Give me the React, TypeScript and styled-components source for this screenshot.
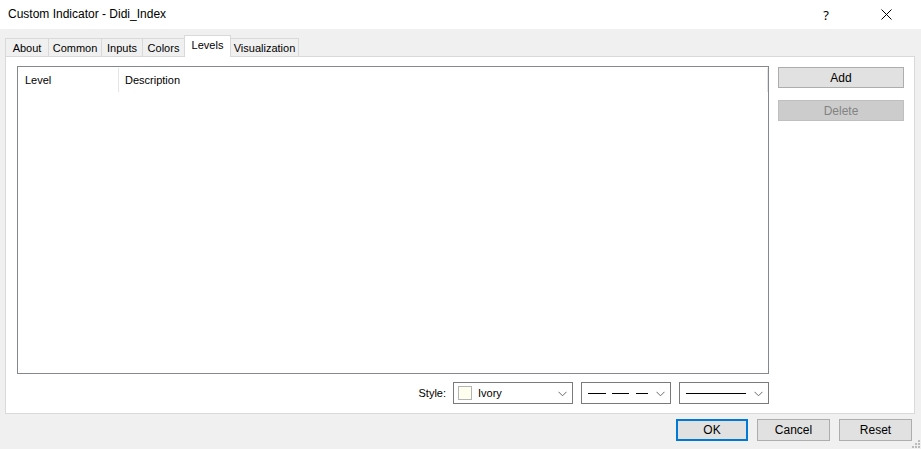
import * as React from 'react'
import styled, { createGlobalStyle } from 'styled-components'

const GlobalStyle = createGlobalStyle`
  html, body {
    margin: 0;
    padding: 0;
    background: #f0f0f0;
  }
  * {
    box-sizing: border-box;
  }
`

const Dialog = styled.div`
  width: 921px;
  height: 449px;
  display: flex;
  flex-direction: column;
  background: #f0f0f0;
  font-family: 'Liberation Sans', Arial, sans-serif;
  font-size: 11px;
  color: #000;
  position: relative;
  overflow: hidden;
`

const TitleBar = styled.div`
  height: 29px;
  background: #fff;
  display: flex;
  align-items: center;
  padding: 0 5px 0 8px;
`

const Title = styled.div`
  flex: 1;
  font-family: 'Liberation Sans', Arial, sans-serif;
  font-size: 12px;
  padding-bottom: 1px;
`

const CaptionButton = styled.div`
  width: 60px;
  height: 29px;
  display: flex;
  align-items: center;
  justify-content: center;
  font-family: 'Noto Sans', sans-serif;
  font-size: 13px;
`

const Body = styled.div`
  flex: 1;
  display: flex;
  flex-direction: column;
  padding: 9px 6px 0 5px;
`

const TabStrip = styled.div`
  display: flex;
  align-items: flex-end;
  height: 18px;
  position: relative;
  z-index: 1;
`

const Tab = styled.div<{ $w: number; $active?: boolean }>`
  width: ${(p) => p.$w}px;
  height: ${(p) => (p.$active ? 22 : 18)}px;
  margin-bottom: ${(p) => (p.$active ? -1 : 0)}px;
  border: 1px solid #d9d9d9;
  border-bottom: none;
  margin-left: -1px;
  background: ${(p) => (p.$active ? '#fff' : '#f0f0f0')};
  display: flex;
  align-items: ${(p) => (p.$active ? 'flex-start' : 'center')};
  padding-top: ${(p) => (p.$active ? 3 : 1)}px;
  justify-content: center;
  &:first-child {
    margin-left: 0;
  }
`

const Panel = styled.div`
  height: 358px;
  background: #fff;
  border: 1px solid #d9d9d9;
  display: flex;
  gap: 9px;
  padding: 9px 10px 9px 11px;
`

const LeftCol = styled.div`
  display: flex;
  flex-direction: column;
  gap: 8px;
`

const ListBox = styled.div`
  width: 752px;
  height: 309px;
  border: 1px solid #828790;
  background: #fff;
`

const ListHeader = styled.div`
  display: flex;
  height: 25px;
  padding-top: 1px;
`

const HeaderCell = styled.div<{ $w?: number }>`
  width: ${(p) => (p.$w ? `${p.$w}px` : 'auto')};
  flex: ${(p) => (p.$w ? 'none' : 1)};
  border-right: 1px solid #e5e5e5;
  display: flex;
  align-items: center;
  padding-left: ${(p) => (p.$w ? 7 : 6)}px;
  padding-bottom: 1px;
`

const StyleRow = styled.div`
  display: flex;
  justify-content: flex-end;
  align-items: center;
  gap: 8px;
  height: 22px;
`

const Label = styled.span`
  margin-right: -1px;
`

const Combo = styled.div<{ $w: number }>`
  width: ${(p) => p.$w}px;
  height: 22px;
  border: 1px solid #7a7a7a;
  background: #fff;
  display: flex;
  align-items: center;
  padding: 0 5px 0 4px;
  gap: 6px;
`

const ComboValue = styled.div`
  flex: 1;
  display: flex;
  align-items: center;
  gap: 6px;
`

const Swatch = styled.span<{ $color: string }>`
  width: 14px;
  height: 14px;
  border: 1px solid #b4b4b4;
  background: ${(p) => p.$color};
`

const RightCol = styled.div`
  display: flex;
  flex-direction: column;
  gap: 12px;
  padding-top: 1px;
`

const Button = styled.div<{ $w: number; $h?: number; $disabled?: boolean; $default?: boolean }>`
  width: ${(p) => p.$w}px;
  height: ${(p) => p.$h ?? 21}px;
  background: ${(p) => (p.$disabled ? '#cccccc' : '#e1e1e1')};
  border: ${(p) =>
    p.$default ? '2px solid #0078d7' : p.$disabled ? '1px solid #bfbfbf' : '1px solid #adadad'};
  color: ${(p) => (p.$disabled ? '#838383' : '#000')};
  display: flex;
  align-items: center;
  justify-content: center;
  font-size: 12px;
`

const Footer = styled.div`
  display: flex;
  justify-content: flex-end;
  gap: 9px;
  padding: 5px 3px 0 0;
`

const Grip = styled.svg`
  position: absolute;
  right: 1px;
  bottom: 1px;
`

const Chevron = () => (
  <svg width="9" height="7" viewBox="0 0 9 7">
    <path d="M0.5 1.8 L4.5 5.8 L8.5 1.8" fill="none" stroke="#6a6a6a" strokeWidth="1" />
  </svg>
)

const tabs = [
  { label: 'About', w: 44 },
  { label: 'Common', w: 54 },
  { label: 'Inputs', w: 42 },
  { label: 'Colors', w: 43 },
  { label: 'Levels', w: 47, active: true },
  { label: 'Visualization', w: 69 },
]

const App = () => {
  return (
    <Dialog>
      <GlobalStyle />
      <TitleBar>
        <Title>Custom Indicator - Didi_Index</Title>
        <CaptionButton>?</CaptionButton>
        <CaptionButton>
          <svg width="11" height="11" viewBox="0 0 11 11">
            <path d="M0.5 0.5 L10.5 10.5 M10.5 0.5 L0.5 10.5" stroke="#000" strokeWidth="1" />
          </svg>
        </CaptionButton>
      </TitleBar>
      <Body>
        <TabStrip>
          {tabs.map((t) => (
            <Tab key={t.label} $w={t.w} $active={t.active}>
              {t.label}
            </Tab>
          ))}
        </TabStrip>
        <Panel>
          <LeftCol>
            <ListBox>
              <ListHeader>
                <HeaderCell $w={101}>Level</HeaderCell>
                <HeaderCell>Description</HeaderCell>
              </ListHeader>
            </ListBox>
            <StyleRow>
              <Label>Style:</Label>
              <Combo $w={120}>
                <ComboValue>
                  <Swatch $color="#fffff0" />
                  Ivory
                </ComboValue>
                <Chevron />
              </Combo>
              <Combo $w={90}>
                <ComboValue>
                  <svg width="64" height="3" viewBox="0 0 64 3">
                    <path d="M2 1.5 H20 M26 1.5 H43 M50 1.5 H62" stroke="#000" strokeWidth="1" />
                  </svg>
                </ComboValue>
                <Chevron />
              </Combo>
              <Combo $w={90}>
                <ComboValue>
                  <svg width="64" height="3" viewBox="0 0 64 3">
                    <path d="M2 1.5 H62" stroke="#000" strokeWidth="1" />
                  </svg>
                </ComboValue>
                <Chevron />
              </Combo>
            </StyleRow>
          </LeftCol>
          <RightCol>
            <Button $w={126}>Add</Button>
            <Button $w={126} $disabled>
              Delete
            </Button>
          </RightCol>
        </Panel>
        <Footer>
          <Button $w={72} $h={22} $default>
            OK
          </Button>
          <Button $w={73} $h={22}>
            Cancel
          </Button>
          <Button $w={73} $h={22}>
            Reset
          </Button>
        </Footer>
      </Body>
      <Grip width="8" height="8" viewBox="0 0 8 8">
        {[
          [6, 0],
          [6, 3],
          [3, 3],
          [6, 6],
          [3, 6],
          [0, 6],
        ].map(([x, y]) => (
          <rect key={`${x}-${y}`} x={x} y={y} width="2" height="2" fill="#bcbcbc" />
        ))}
      </Grip>
    </Dialog>
  )
}

export default App
